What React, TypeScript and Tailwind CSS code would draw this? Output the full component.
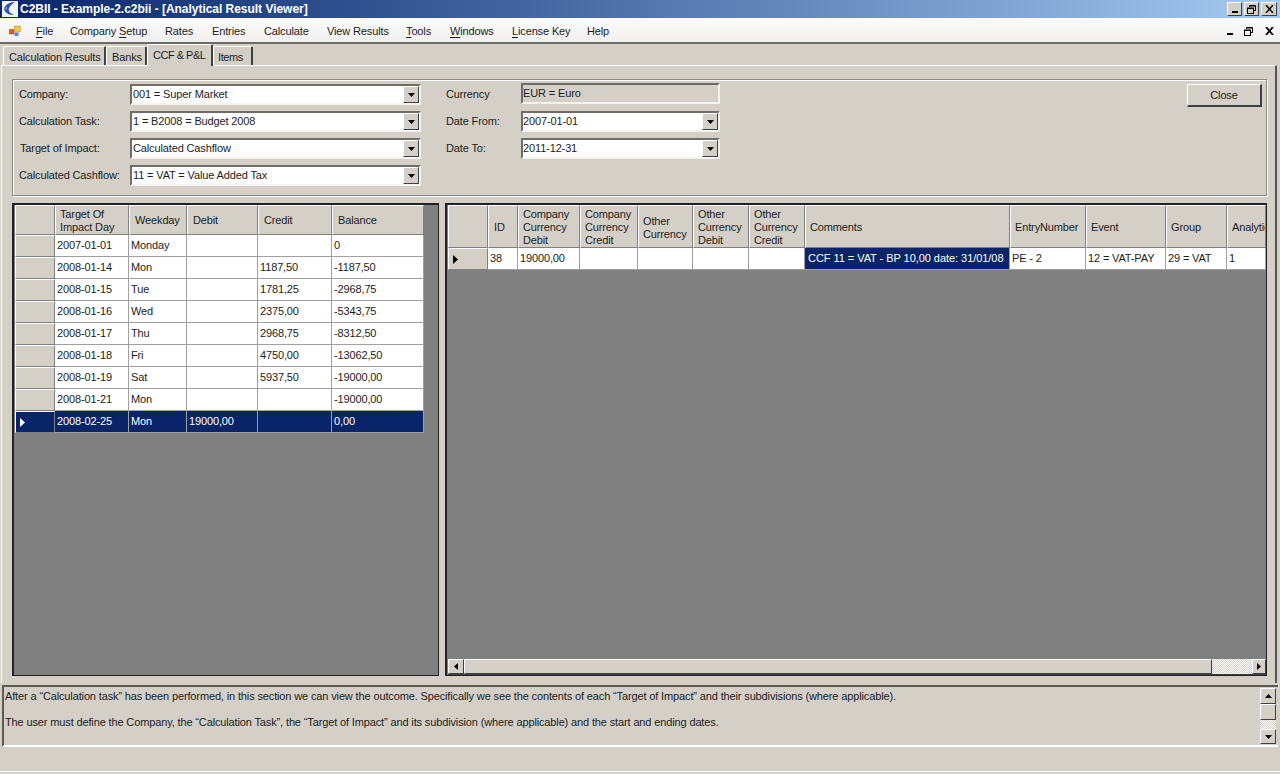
import React from "react";

const Arrow = ({ dir = "down", color = "#000" }: { dir?: "down" | "up" | "left" | "right"; color?: string }) => {
  const pts = { down: "0,0 7,0 3.5,4", up: "0,4 7,4 3.5,0", left: "4,0 4,7 0,3.5", right: "0,0 0,7 4,3.5" }[dir];
  const horizontal = dir === "left" || dir === "right";
  return (
    <svg width={horizontal ? 4 : 7} height={horizontal ? 7 : 4} viewBox={horizontal ? "0 0 4 7" : "0 0 7 4"}>
      <polygon points={pts} fill={color} />
    </svg>
  );
};

const RowMark = ({ color }: { color: string }) => (
  <svg width="5" height="9" viewBox="0 0 5 9"><polygon points="0,0 0,9 5,4.5" fill={color} /></svg>
);

const Btn = ({ children, className = "" }: { children?: React.ReactNode; className?: string }) => (
  <div className={`flex items-center justify-center bg-[#d4d0c8] border border-t-white border-l-white border-r-[#404040] border-b-[#404040] ${className}`}>
    {children}
  </div>
);

const Combo = ({ text, className = "", textClass = "pl-[1px]" }: { text: string; className?: string; textClass?: string }) => (
  <div className={`h-[21px] flex items-center bg-white border-2 border-t-[#6f6d66] border-l-[#6f6d66] border-r-[#f4f3f0] border-b-[#f4f3f0] ${className}`}>
    <span className={`flex-1 truncate ${textClass}`}>{text}</span>
    <Btn className="w-4 h-[17px]"><Arrow /></Btn>
  </div>
);

const Label = ({ children, className = "" }: { children: React.ReactNode; className?: string }) => (
  <div className={`h-[21px] flex items-center whitespace-nowrap ${className}`}>{children}</div>
);

const U = ({ children }: { children: React.ReactNode }) => <span className="underline underline-offset-2">{children}</span>;

const Hd = ({ children, pad = "pl-[5px]" }: { children?: React.ReactNode; pad?: string }) => (
  <div className={`flex items-center bg-[#d4d0c8] leading-[13px] border-l border-t border-l-white border-t-white border-r border-b border-r-[#808080] border-b-[#808080] overflow-hidden whitespace-nowrap ${pad}`}>
    {children}
  </div>
);

const Cell = ({ children, sel = false, className = "" }: { children?: React.ReactNode; sel?: boolean; className?: string }) => (
  <div className={`flex items-center pl-[2px] h-[22px] border-r border-b border-r-[#a0a0a0] border-b-[#a0a0a0] overflow-hidden whitespace-nowrap ${sel ? "bg-[#0a246a] text-white" : "bg-white"} ${className}`}>
    {children}
  </div>
);

const RowHead = ({ mark }: { mark?: "white" | "black" }) => (
  <div className={`flex items-center pl-[4px] h-[22px] border-l border-t border-l-white border-t-white border-r border-b border-r-[#808080] border-b-[#808080] ${mark === "white" ? "bg-[#0a246a]" : "bg-[#d4d0c8]"}`}>
    {mark && <RowMark color={mark === "white" ? "#fff" : "#000"} />}
  </div>
);

const leftRows = [
  ["2007-01-01", "Monday", "", "", "0"],
  ["2008-01-14", "Mon", "", "1187,50", "-1187,50"],
  ["2008-01-15", "Tue", "", "1781,25", "-2968,75"],
  ["2008-01-16", "Wed", "", "2375,00", "-5343,75"],
  ["2008-01-17", "Thu", "", "2968,75", "-8312,50"],
  ["2008-01-18", "Fri", "", "4750,00", "-13062,50"],
  ["2008-01-19", "Sat", "", "5937,50", "-19000,00"],
  ["2008-01-21", "Mon", "", "", "-19000,00"],
  ["2008-02-25", "Mon", "19000,00", "", "0,00"],
];

const rightHeads = [
  "ID",
  <>Company<br />Currency<br />Debit</>,
  <>Company<br />Currency<br />Credit</>,
  <>Other<br />Currency</>,
  <>Other<br />Currency<br />Debit</>,
  <>Other<br />Currency<br />Credit</>,
  "Comments",
  "EntryNumber",
  "Event",
  "Group",
  "Analytic",
];

const rightRow = ["38", "19000,00", "", "", "", "", "CCF 11 = VAT - BP 10,00 date: 31/01/08", "PE - 2", "12 = VAT-PAY", "29 = VAT", "1"];

const dither = "bg-[repeating-conic-gradient(#ffffff_0_25%,#d4d0c8_0_50%)] bg-[length:2px_2px]";

const menu: [React.ReactNode, string][] = [
  [<><U>F</U>ile</>, "w-[34px]"],
  [<>Company <U>S</U>etup</>, "w-[95px]"],
  ["Rates", "w-[47px]"],
  ["Entries", "w-[52px]"],
  ["Calculate", "w-[63px]"],
  ["View Results", "w-[79px]"],
  [<><U>T</U>ools</>, "w-[44px]"],
  [<><U>W</U>indows</>, "w-[62px]"],
  [<><U>L</U>icense Key</>, "w-[75px]"],
  ["Help", "w-[40px]"],
];

const Tab = ({ children, className = "" }: { children: React.ReactNode; className?: string }) => (
  <div className={`flex items-center whitespace-nowrap bg-[#d4d0c8] border-l border-t border-r-2 border-l-white border-t-white border-r-[#404040] rounded-t-[2px] ${className}`}>
    {children}
  </div>
);

export default function App() {
  return (
    <div className="w-[1280px] h-[774px] overflow-hidden flex flex-col bg-[#d4d0c8] text-[#1c1c1c] text-[11px] tracking-[-0.135px] font-['Liberation_Sans',Arial,sans-serif]">
      {/* Title bar */}
      <div className="h-[18px] flex items-center bg-gradient-to-r from-[#0a246a] to-[#a6caf0] pl-[2px] pr-[3px] shrink-0">
        <svg width="16" height="16" viewBox="0 0 16 16">
          <rect width="16" height="16" fill="#f2f4fa" />
          <path d="M13 1C7 1 3 4 2 8c1 4 5 6 10 6-4-2-6-4-5-7 1-2 3-4 6-6z" fill="#2a55b0" />
          <path d="M1 7l4-1 0 3z" fill="#6f92d8" />
        </svg>
        <span className="ml-[2px] text-white font-bold text-[12px] tracking-[-0.03px] whitespace-nowrap">C2BII - Example-2.c2bii - [Analytical Result Viewer]</span>
        <div className="ml-auto flex items-center">
          <Btn className="w-[15px] h-[14px] items-end pb-[2px]"><div className="w-[6px] h-[2px] bg-black" /></Btn>
          <Btn className="w-[15px] h-[14px] ml-[2px]">
            <svg width="9" height="9" viewBox="0 0 9 9" fill="none" stroke="#000"><path d="M2.5 2V.5h6v5H7" /><rect x=".5" y="3" width="6" height="5.5" /><path d="M1 3.5h5M3 1h5" /></svg>
          </Btn>
          <Btn className="w-[16px] h-[14px] ml-[2px]">
            <svg width="9" height="8" viewBox="0 0 9 8" stroke="#000" strokeWidth="1.4"><path d="M1 0l7 8M8 0L1 8" /></svg>
          </Btn>
        </div>
      </div>

      {/* Menu bar */}
      <div className="h-[26px] pt-[2px] shrink-0 flex items-center bg-gradient-to-b from-[#fbfbfa] to-[#f1f0ee] border-b-2 border-b-[#6b6a64]">
        <svg className="ml-[9px] mr-[15px]" width="12" height="12" viewBox="0 0 12 12">
          <rect x="0.5" y="4.5" width="4.5" height="4.5" fill="#e0552a" stroke="#a8431f" strokeWidth=".5" />
          <rect x="5.5" y="1" width="6" height="6" fill="#f6c344" stroke="#b98f2a" strokeWidth=".5" />
          <rect x="5.5" y="7.5" width="4" height="3.5" fill="#5d86d6" />
        </svg>
        {menu.map(([t, w], i) => (
          <div key={i} className={`${w} whitespace-nowrap`}>{t}</div>
        ))}
        <div className="ml-auto flex items-center pr-[6px]">
          <div className="w-[6px] h-[2px] bg-black mt-[6px]" />
          <svg className="ml-[11px]" width="9" height="9" viewBox="0 0 9 9" fill="none" stroke="#000"><path d="M2.5 2V.5h6v5H7" /><rect x=".5" y="3" width="6" height="5.5" /><path d="M1 3.5h5M3 1h5" /></svg>
          <svg className="ml-[12px]" width="9" height="8" viewBox="0 0 9 8" stroke="#000" strokeWidth="1.8"><path d="M1 0l7 8M8 0L1 8" /></svg>
        </div>
      </div>

      {/* Tabs */}
      <div className="h-[21px] shrink-0 flex items-end pl-[3px] relative z-10">
        <Tab className="w-[103px] h-[19px] pl-[5px] pt-[2px]">Calculation Results</Tab>
        <Tab className="w-[41px] h-[19px] pl-[5px] pt-[2px]">Banks</Tab>
        <Tab className="w-[66px] h-[22px] pl-[5px] pb-[1px] -mb-px tracking-[-0.5px]">CCF &amp; P&amp;L</Tab>
        <Tab className="w-[40px] h-[19px] pl-[4px] pt-[2px] tracking-[-0.4px]">Items</Tab>
      </div>

      {/* Tab page */}
      <div className="h-[618px] shrink-0 ml-[1px] mr-[3px] pl-[10px] pr-[8px] pt-[13px] border-t border-t-white border-l border-l-white border-r-2 border-r-[#555] flex flex-col gap-[7px]">
        {/* Filter group */}
        <div className="h-[117px] shrink-0 border border-[#8a8880] shadow-[inset_1px_1px_0_#fff,1px_1px_0_#fff] pl-[6px] pr-[4px] pt-[4px] flex">
          <div className="w-[402px] flex flex-col gap-[6px]">
            <div className="flex"><Label className="w-[111px]">Company:</Label><Combo className="w-[291px]" text="001 = Super Market" /></div>
            <div className="flex"><Label className="w-[111px]">Calculation Task:</Label><Combo className="w-[291px]" text="1 = B2008 = Budget 2008" /></div>
            <div className="flex"><Label className="w-[111px] pl-px">Target of Impact:</Label><Combo className="w-[291px]" text="Calculated Cashflow" /></div>
            <div className="flex"><Label className="w-[111px]">Calculated Cashflow:</Label><Combo className="w-[291px]" text="11 = VAT = Value Added Tax" /></div>
          </div>
          <div className="ml-[25px] w-[274px] flex flex-col gap-[6px]">
            <div className="flex -mt-px">
              <Label className="w-[75px] pt-px">Currency</Label>
              <div className="w-[199px] h-[21px] flex items-center bg-[#d4d0c8] border-2 border-t-[#6f6d66] border-l-[#6f6d66] border-r-[#f4f3f0] border-b-[#f4f3f0]">EUR = Euro</div>
            </div>
            <div className="flex mt-px"><Label className="w-[75px]">Date From:</Label><Combo className="w-[199px]" text="2007-01-01" textClass="" /></div>
            <div className="flex"><Label className="w-[75px]">Date To:</Label><Combo className="w-[199px]" text="2011-12-31" textClass="" /></div>
          </div>
          <Btn className="ml-auto w-[75px] h-[23px] border-r-2 border-b-2 pt-px">Close</Btn>
        </div>

        {/* Grids */}
        <div className="flex gap-[6px] h-[473px] shrink-0">
          <div className="w-[428px] h-[473px] bg-[#808080] border-t-2 border-l-2 border-r border-b border-[#222]">
            <div className="ml-px w-[409px] grid grid-cols-[40px_74px_58px_71px_74px_92px]">
              <Hd />
              <Hd pad="pl-[4px]"><div className="h-[28px] pt-px flex items-center">Target Of<br />Impact Day</div></Hd>
              <Hd>Weekday</Hd>
              <Hd>Debit</Hd>
              <Hd>Credit</Hd>
              <Hd>Balance</Hd>
              {leftRows.map((r, i) => {
                const sel = i === leftRows.length - 1;
                return (
                  <React.Fragment key={i}>
                    <RowHead mark={sel ? "white" : undefined} />
                    {r.map((c, j) => <Cell key={j} sel={sel}>{c}</Cell>)}
                  </React.Fragment>
                );
              })}
            </div>
          </div>

          <div className="w-[822px] h-[473px] flex flex-col bg-[#808080] border-t-2 border-l-2 border-r border-b border-[#222]">
            <div className="ml-px grid grid-cols-[40px_30px_62px_58px_55px_56px_56px_205px_76px_80px_61px_39px] shrink-0">
              <Hd />
              {rightHeads.map((h, i) => (
                <Hd key={i} pad={i === 0 ? "pl-[5px]" : "pl-[4px]"}><div className="h-[41px] pt-[2px] flex items-center">{typeof h === "string" ? h : <div>{h}</div>}</div></Hd>
              ))}
              <RowHead mark="black" />
              {rightRow.map((c, i) => (
                <Cell key={i} sel={i === 6} className={i === 6 ? "pl-[3px] tracking-[-0.05px]" : ""}>{c}</Cell>
              ))}
            </div>
            <div className="flex-1" />
            <div className="h-[16px] shrink-0 ml-px flex bg-[#d4d0c8] border-b border-b-[#404040]">
              <Btn className="w-[16px]"><Arrow dir="left" /></Btn>
              <Btn className="w-[748px]" />
              <div className={`w-[40px] ${dither}`} />
              <Btn className="w-[14px]"><Arrow dir="right" /></Btn>
            </div>
          </div>
        </div>
      </div>

      {/* Description */}
      <div className="h-[62px] shrink-0 mt-[2px] ml-[2px] mr-[2px] flex border-t-2 border-l-2 border-t-[#5c5b55] border-l-[#5c5b55] border-b-2 border-b-white">
        <div className="flex-1 pl-px pt-[3px] leading-[13px] whitespace-pre-line">
          {"After a “Calculation task” has been performed, in this section we can view the outcome. Specifically we see the contents of each “Target of Impact” and their subdivisions (where applicable).\n\nThe user must define the Company, the “Calculation Task”, the “Target of Impact” and its subdivision (where applicable) and the start and ending dates."}
        </div>
        <div className="w-[16px] mr-[2px] flex flex-col mt-[1px]">
          <Btn className="h-[16px] shrink-0"><Arrow dir="up" /></Btn>
          <Btn className="h-[16px] shrink-0" />
          <div className={`h-[9px] shrink-0 ${dither}`} />
          <Btn className="h-[15px] shrink-0"><Arrow /></Btn>
        </div>
      </div>

      {/* Status bar */}
      <div className="h-[25px] shrink-0 border-b border-b-white" />
    </div>
  );
}
